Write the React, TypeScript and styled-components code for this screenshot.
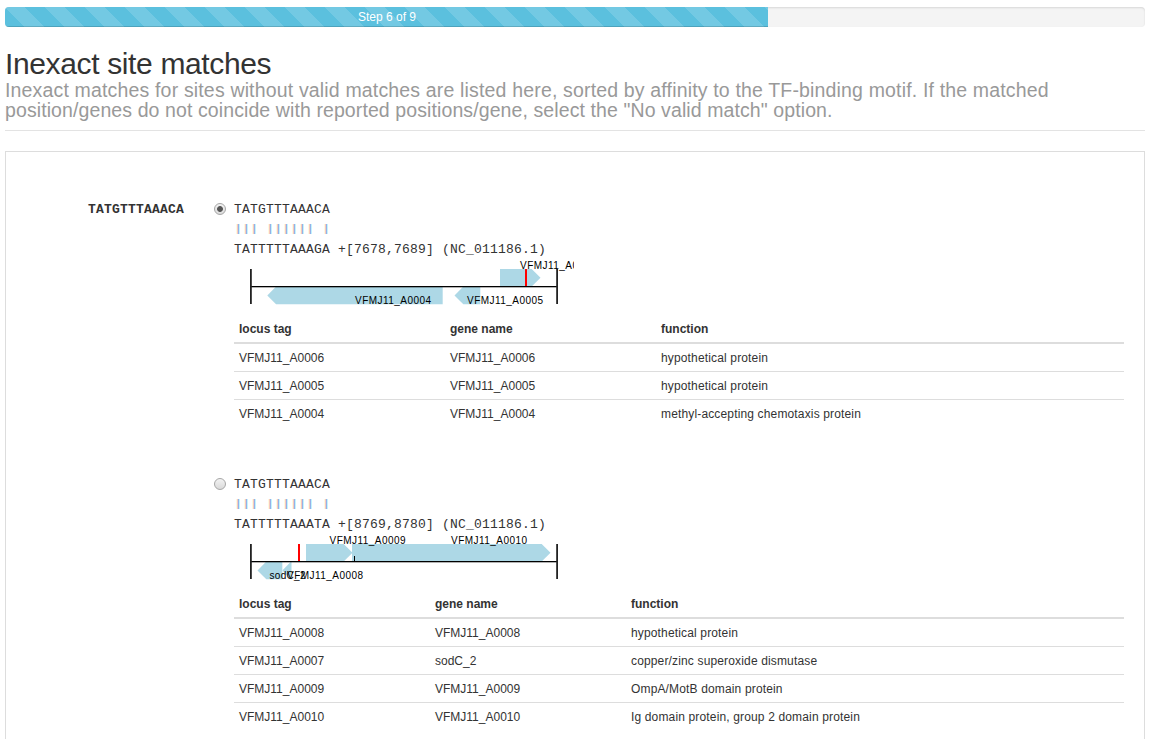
import React, { useState } from 'react';
import styled, { createGlobalStyle } from 'styled-components';

const GlobalStyle = createGlobalStyle`
  html, body { margin: 0; padding: 0; background: #fff; overflow: hidden; }
  * { box-sizing: border-box; }
  body {
    font-family: "Liberation Sans", Arial, sans-serif;
    font-size: 12px;
    line-height: 17px;
    color: #333;
  }
`;

const Page = styled.div`
  height: 739px;
  overflow: hidden;
  display: flex;
  flex-direction: column;
  padding: 7px 8px 0 5px;
`;

const Progress = styled.div`
  flex: none;
  height: 20px;
  border-radius: 4px;
  overflow: hidden;
  background: #f4f4f4;
  box-shadow: inset 0 1px 2px rgba(0, 0, 0, 0.12);
`;

const ProgressBar = styled.div`
  width: 763px;
  height: 20px;
  padding-left: 1px;
  text-align: center;
  line-height: 20px;
  color: #fff;
  background-color: #5bc0de;
  background-image: linear-gradient(
    45deg,
    rgba(255, 255, 255, 0.15) 25%,
    transparent 25%,
    transparent 50%,
    rgba(255, 255, 255, 0.15) 50%,
    rgba(255, 255, 255, 0.15) 75%,
    transparent 75%,
    transparent
  );
  background-size: 40px 40px;
  box-shadow: inset 0 -1px 0 rgba(0, 0, 0, 0.15);
`;

const Header = styled.header`
  flex: none;
  height: 104px;
  padding-top: 20px;
  border-bottom: 1px solid #e3e3e3;
`;

const Title = styled.h1`
  margin: 0;
  font-size: 30px;
  font-weight: 400;
  line-height: 33px;
  letter-spacing: -0.36px;
  white-space: nowrap;
`;

const Subtitle = styled.p`
  margin: 0;
  font-size: 19.5px;
  line-height: 20px;
  color: #999;
  white-space: nowrap;
`;

const Line = styled.span<{ $spacing: number }>`
  display: block;
  letter-spacing: ${(p) => p.$spacing}px;
`;

const Panel = styled.main`
  flex: 1;
  margin-top: 20px;
  border: 1px solid #ddd;
  border-bottom: 0;
  display: flex;
  align-items: flex-start;
  padding: 48px 20px 0 82px;
`;

const Mono = styled.div<{ $bold?: boolean }>`
  font-family: "Liberation Mono", "Courier New", monospace;
  font-size: 13px;
  letter-spacing: 0.2px;
  line-height: 20px;
  font-weight: ${(p) => (p.$bold ? 700 : 400)};
  white-space: pre;
`;

const SiteLabel = styled(Mono)`
  width: 126px;
  flex: none;
`;

const Options = styled.div`
  flex: 1;
  display: flex;
  flex-direction: column;
`;

const Option = styled.label`
  display: flex;
  height: 275px;
`;

const Radio = styled.input`
  appearance: none;
  flex: none;
  width: 12px;
  height: 12px;
  margin: 3px 8px 0 0;
  border: 1px solid #a6a6a6;
  border-radius: 50%;
  background: linear-gradient(#f2f2f2, #d9d9d9);
  &:checked {
    background: radial-gradient(circle at center, #555 0 2.5px, transparent 3.3px),
      linear-gradient(#f2f2f2, #dcdcdc);
  }
`;

const Match = styled.div`
  flex: 1;
`;

const Bars = styled(Mono)`
  height: 20px;
  padding-left: 1.2px;
  font-size: 11px;
  line-height: 19px;
  letter-spacing: 1.4px;
  color: #4f9fe0;
  text-shadow: -1px 0 0 #f3c08a;
`;

const Map = styled.svg`
  display: block;
  width: 340px;
  height: 49px;
  font-family: "Liberation Sans", Arial, sans-serif;
  font-size: 10px;
`;

const Table = styled.div`
  margin-top: 9px;
`;

const Row = styled.div<{ $cols: string; $head?: boolean }>`
  display: grid;
  grid-template-columns: ${(p) => p.$cols};
  height: ${(p) => (p.$head ? 26 : 28)}px;
  padding-top: ${(p) => (p.$head ? 3 : 6)}px;
  font-weight: ${(p) => (p.$head ? 700 : 400)};
  border-bottom: ${(p) => (p.$head ? '2px' : '1px')} solid #ddd;
  &:last-child { border-bottom: 0; }
`;

const Cell = styled.span<{ $wide?: boolean }>`
  padding-left: 5px;
  letter-spacing: ${(p) => (p.$wide ? 0.15 : 0)}px;
  white-space: nowrap;
`;

type Gene = { from: number; to: number; strand: 1 | -1; label: string; labelX: number; labelW: number };
type Candidate = {
  seq: string;
  bars: string;
  match: string;
  cols: string;
  site: number;
  tick?: number;
  genes: Gene[];
  rows: string[][];
};

// Gene coordinates are pixels from the left edge of the map.
const candidates: Candidate[] = [
  {
    seq: 'TATGTTTAAACA',
    bars: '||| |||||| |',
    match: 'TATTTTTAAAGA +[7678,7689] (NC_011186.1)',
    cols: '211px 211px 1fr',
    site: 292,
    genes: [
      { from: 33.3, to: 208.7, strand: -1, label: 'VFMJ11_A0004', labelX: 121, labelW: 76 },
      { from: 220.5, to: 246.3, strand: -1, label: 'VFMJ11_A0005', labelX: 233, labelW: 76 },
      { from: 266, to: 306.5, strand: 1, label: 'VFMJ11_A0006', labelX: 286, labelW: 76 },
    ],
    rows: [
      ['VFMJ11_A0006', 'VFMJ11_A0006', 'hypothetical protein'],
      ['VFMJ11_A0005', 'VFMJ11_A0005', 'hypothetical protein'],
      ['VFMJ11_A0004', 'VFMJ11_A0004', 'methyl-accepting chemotaxis protein'],
    ],
  },
  {
    seq: 'TATGTTTAAACA',
    bars: '||| |||||| |',
    match: 'TATTTTTAAATA +[8769,8780] (NC_011186.1)',
    cols: '196px 196px 1fr',
    site: 65,
    tick: 120.5,
    genes: [
      { from: 23.5, to: 48.3, strand: -1, label: 'sodC_2', labelX: 35.5, labelW: 36 },
      { from: 48.3, to: 57.5, strand: -1, label: 'VFMJ11_A0008', labelX: 53, labelW: 76 },
      { from: 72, to: 118.5, strand: 1, label: 'VFMJ11_A0009', labelX: 95.5, labelW: 76 },
      { from: 118, to: 316.5, strand: 1, label: 'VFMJ11_A0010', labelX: 217, labelW: 76 },
    ],
    rows: [
      ['VFMJ11_A0008', 'VFMJ11_A0008', 'hypothetical protein'],
      ['VFMJ11_A0007', 'sodC_2', 'copper/zinc superoxide dismutase'],
      ['VFMJ11_A0009', 'VFMJ11_A0009', 'OmpA/MotB domain protein'],
      ['VFMJ11_A0010', 'VFMJ11_A0010', 'Ig domain protein, group 2 domain protein'],
    ],
  },
];

function genePoints({ from, to, strand }: Gene) {
  const head = 8.8;
  return strand === 1
    ? `${from},9 ${to - head},9 ${to},17.7 ${to - head},26.5 ${from},26.5`
    : `${to},26.5 ${from + head},26.5 ${from},35.5 ${from + head},44.3 ${to},44.3`;
}

function GeneMap({ c }: { c: Candidate }) {
  return (
    <Map viewBox="0 0 340 49">
      {c.genes.map((g) => (
        <polygon key={g.label} points={genePoints(g)} fill="#add8e6" />
      ))}
      <rect x="16" y="26" width="307" height="1.3" fill="#000" />
      <rect x="16" y="9" width="1.8" height="35" fill="#222" />
      <rect x="322.2" y="9" width="1.8" height="35" fill="#222" />
      {c.tick && <rect x={c.tick - 0.5} y="21" width="1" height="5" fill="#000" />}
      <rect x={c.site - 1} y="9" width="2" height="17" fill="#f00" />
      {c.genes.map((g) => (
        <text key={g.label} x={g.labelX} y={g.strand === 1 ? 9 : 44} textLength={g.labelW} fill="#000">
          {g.label}
        </text>
      ))}
    </Map>
  );
}

export default function App() {
  const [selected, setSelected] = useState(0);
  return (
    <>
      <GlobalStyle />
      <Page>
        <Progress>
          <ProgressBar>Step 6 of 9</ProgressBar>
        </Progress>
        <Header>
          <Title>Inexact site matches</Title>
          <Subtitle>
            <Line $spacing={0.165}>
              Inexact matches for sites without valid matches are listed here, sorted by affinity to the TF-binding motif. If the matched
            </Line>
            <Line $spacing={0.098}>
              position/genes do not coincide with reported positions/gene, select the "No valid match" option.
            </Line>
          </Subtitle>
        </Header>
        <Panel>
          <SiteLabel $bold>TATGTTTAAACA</SiteLabel>
          <Options>
            {candidates.map((c, i) => (
              <Option key={c.match}>
                <Radio type="radio" name="match" checked={selected === i} onChange={() => setSelected(i)} />
                <Match>
                  <Mono>{c.seq}</Mono>
                  <Bars>{c.bars}</Bars>
                  <Mono>{c.match}</Mono>
                  <GeneMap c={c} />
                  <Table>
                    <Row $cols={c.cols} $head>
                      <Cell>locus tag</Cell>
                      <Cell>gene name</Cell>
                      <Cell>function</Cell>
                    </Row>
                    {c.rows.map((r) => (
                      <Row key={r[0]} $cols={c.cols}>
                        {r.map((v, k) => (
                          <Cell key={k} $wide={k === 2}>
                            {v}
                          </Cell>
                        ))}
                      </Row>
                    ))}
                  </Table>
                </Match>
              </Option>
            ))}
          </Options>
        </Panel>
      </Page>
    </>
  );
}
